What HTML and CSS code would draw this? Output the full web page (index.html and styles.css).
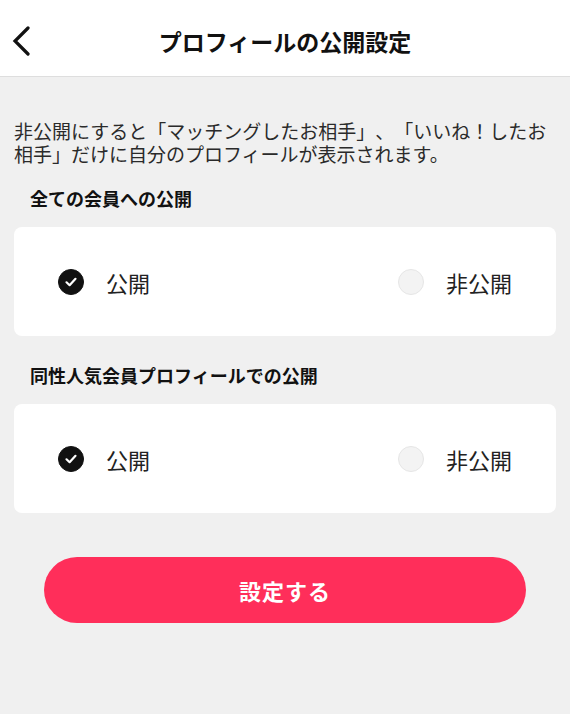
FILE: index.html
```html
<!DOCTYPE html>
<html lang="ja">
<head>
    <meta charset="UTF-8">
    <meta name="viewport" content="width=device-width, initial-scale=1.0">
    <title>プロフィールの公開設定</title>
    <link rel="stylesheet" href="styles.css">
</head>
<body>
    <header class="topbar">
        <button class="back" aria-label="戻る">
            <svg width="20" height="30" viewBox="0 0 20 30">
                <path d="M17 2 L4 15 L17 28" fill="none" stroke="#111" stroke-width="3.2" stroke-linecap="round" stroke-linejoin="miter"/>
            </svg>
        </button>
        <h1>プロフィールの公開設定</h1>
        <span></span>
    </header>

    <main class="content">
        <p class="note">非公開にすると「マッチングしたお相手」、「いいね！したお相手」だけに自分のプロフィールが表示されます。</p>

        <section class="section">
            <h2 class="section-title">全ての会員への公開</h2>
            <div class="card">
                <label class="option">
                    <span class="radio checked">
                        <svg width="14" height="14" viewBox="0 0 14 14">
                            <path d="M2.5 7.3 L5.6 10.2 L11.5 3.8" fill="none" stroke="#fff" stroke-width="2.2" stroke-linecap="round" stroke-linejoin="round"/>
                        </svg>
                    </span>
                    公開
                </label>
                <label class="option">
                    <span class="radio"></span>
                    非公開
                </label>
            </div>
        </section>

        <section class="section">
            <h2 class="section-title">同性人気会員プロフィールでの公開</h2>
            <div class="card">
                <label class="option">
                    <span class="radio checked">
                        <svg width="14" height="14" viewBox="0 0 14 14">
                            <path d="M2.5 7.3 L5.6 10.2 L11.5 3.8" fill="none" stroke="#fff" stroke-width="2.2" stroke-linecap="round" stroke-linejoin="round"/>
                        </svg>
                    </span>
                    公開
                </label>
                <label class="option">
                    <span class="radio"></span>
                    非公開
                </label>
            </div>
        </section>

        <button class="submit">設定する</button>
    </main>
</body>
</html>
```

FILE: styles.css
```css
body { margin: 0; background: #f0f0f0; font-family: "Noto Sans CJK JP", "Noto Sans", sans-serif; color: #1a1a1a; text-spacing-trim: space-all; }

.topbar { display: grid; grid-template-columns: 60px 1fr 60px; align-items: center; height: 77px; padding-top: 6px; box-sizing: border-box; background: #fff; border-bottom: 1px solid #dedede; }
.topbar h1 { margin: 0; text-align: center; font-size: 23px; font-weight: bold; color: #111; }
.back { display: flex; align-items: center; border: none; background: none; padding: 0 0 0 11px; cursor: pointer; }

.content { padding: 0 14px 40px; }
.note { margin: 42px 0 0; font-size: 19px; line-height: 23px; color: #2a2a2a; }

.section-title { margin: 21px 16px 17px; font-size: 18px; line-height: 24px; font-weight: bold; color: #111; }
.section + .section .section-title { margin-top: 27px; }

.card { display: flex; justify-content: space-between; align-items: center; height: 109px; padding: 0 44px; background: #fff; border-radius: 8px; box-sizing: border-box; }
.option { display: flex; align-items: center; gap: 22px; font-size: 22px; color: #222; }
.radio { display: flex; align-items: center; justify-content: center; width: 26px; height: 26px; border-radius: 50%; background: #f3f3f3; border: 1px solid #e6e6e6; box-sizing: border-box; }
.radio.checked { background: #111; border-color: #111; }

.submit { display: block; width: 482px; height: 66px; margin: 44px auto 0; border: none; border-radius: 33px; background: #ff2e5a; color: #fff; font-family: inherit; font-size: 22px; font-weight: bold; letter-spacing: 1px; cursor: pointer; }
```
